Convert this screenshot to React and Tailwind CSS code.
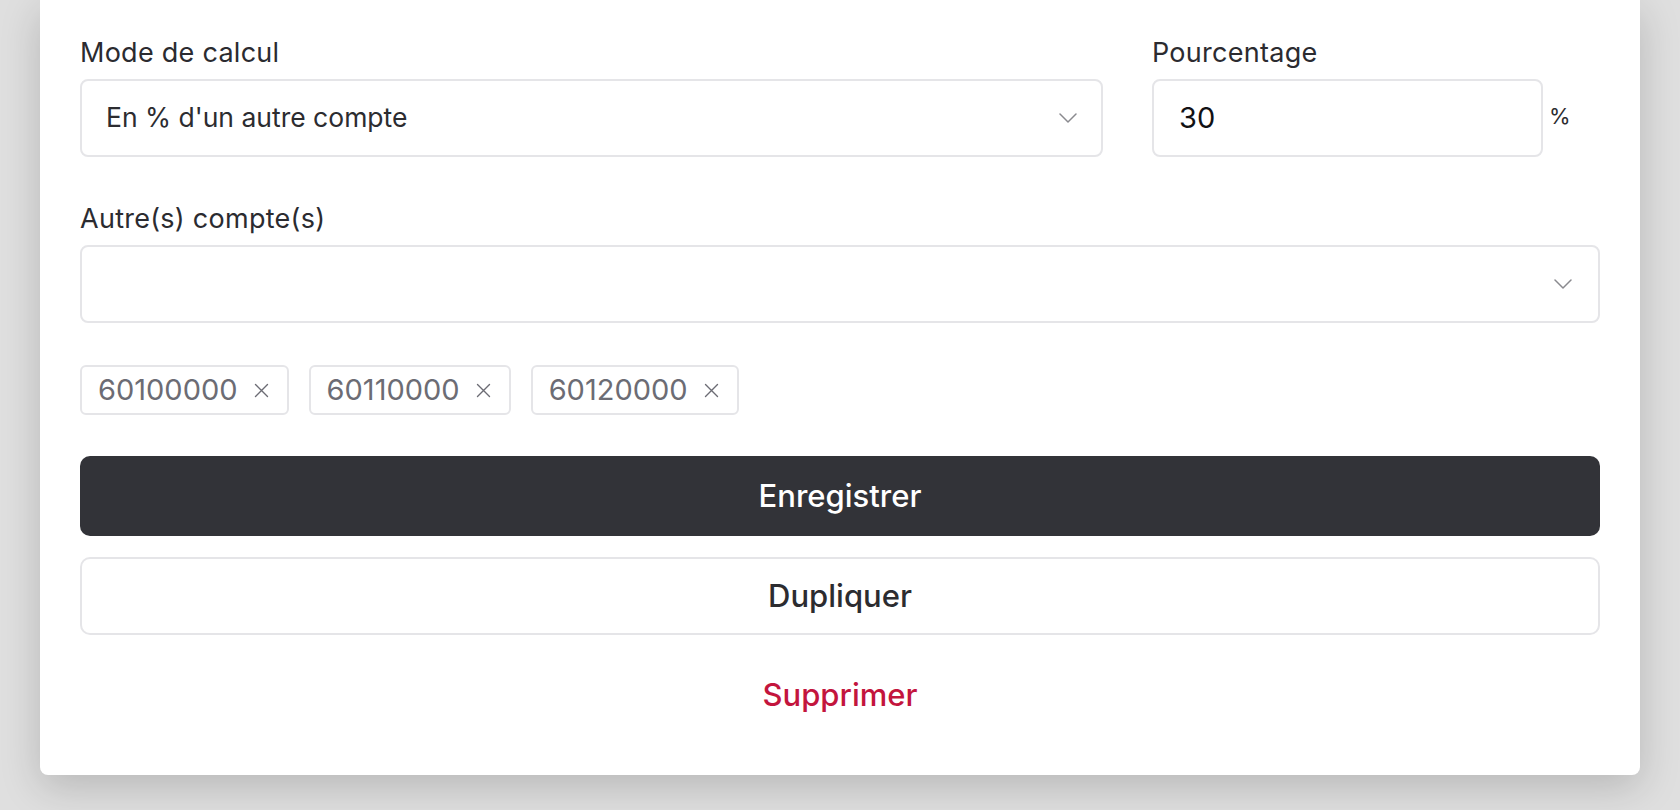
import React from 'react';

function Chevron() {
  return (
    <svg width="18" height="10" viewBox="0 0 18 10" fill="none" className="shrink-0">
      <polyline points="1,1 9,9 17,1" stroke="#8a8a8f" strokeWidth="1.5" strokeLinecap="round" strokeLinejoin="round" />
    </svg>
  );
}

function Cross() {
  return (
    <svg width="15" height="15" viewBox="0 0 15 15" fill="none" className="shrink-0">
      <path d="M1.5 1.5L13.5 13.5M13.5 1.5L1.5 13.5" stroke="#6c6c74" strokeWidth="1.4" strokeLinecap="round" />
    </svg>
  );
}

function Label({ children }) {
  return (
    <div className="text-[27px] leading-[32px] tracking-[0.01em] text-[#2b2b30] mb-[10px]">
      {children}
    </div>
  );
}

function Tag({ code }) {
  return (
    <div className="h-[50px] flex items-center gap-4 pl-[16px] pr-[18px] border-2 border-[#e5e5e8] rounded-md">
      <span className="text-[29px] text-[#6c6c74]">{code}</span>
      <Cross />
    </div>
  );
}

export default function App() {
  return (
    <div className="min-h-screen bg-[#dfdfdf] px-[40px] font-['Inter',sans-serif]">
      <div className="bg-white rounded-b-lg shadow-[0_12px_40px_rgba(0,0,0,0.18)] px-[40px] pt-[37px] pb-[60px]">
        <div className="flex gap-[49px]">
          <div className="w-[1023px]">
            <Label>Mode de calcul</Label>
            <div className="h-[78px] flex items-center justify-between pl-[24px] pr-[24px] border-2 border-[#e5e5e8] rounded-lg">
              <span className="text-[26.5px] text-[#2c2c30]">En % d'un autre compte</span>
              <Chevron />
            </div>
          </div>
          <div className="flex-1">
            <Label>Pourcentage</Label>
            <div className="flex items-center gap-[6px]">
              <div className="w-[391px] h-[78px] flex items-center pl-[25px] border-2 border-[#e5e5e8] rounded-lg">
                <span className="text-[29px] text-[#111114]">30</span>
              </div>
              <span className="text-[22px] text-[#2c2c30] -mt-1">%</span>
            </div>
          </div>
        </div>

        <div className="mt-[46px]">
          <Label>Autre(s) compte(s)</Label>
          <div className="h-[78px] flex items-center justify-end pr-[26px] border-2 border-[#e5e5e8] rounded-lg">
            <Chevron />
          </div>
        </div>

        <div className="mt-[42px] flex gap-[20px]">
          <Tag code="60100000" />
          <Tag code="60110000" />
          <Tag code="60120000" />
        </div>

        <button className="mt-[41px] w-full h-[80px] bg-[#323338] rounded-[10px] text-white text-[31px] font-medium flex items-center justify-center">
          Enregistrer
        </button>
        <button className="mt-[21px] w-full h-[78px] bg-white border-2 border-[#e5e5e8] rounded-[10px] text-[#2c2c30] text-[31px] font-medium flex items-center justify-center">
          Dupliquer
        </button>
        <div className="mt-[40px] h-[40px] flex items-center justify-center text-[31px] font-medium text-[#c3153d]">
          Supprimer
        </div>
      </div>
    </div>
  );
}
